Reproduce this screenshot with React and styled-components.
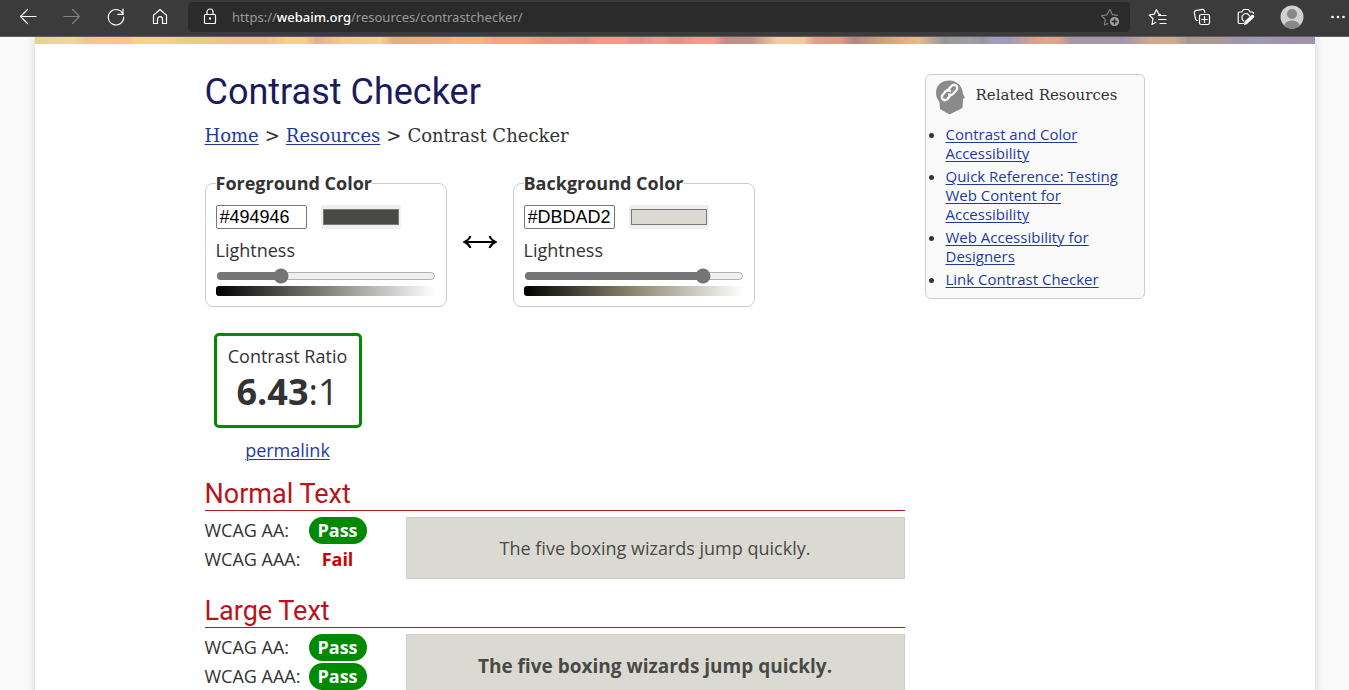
import React from "react";
import styled, { createGlobalStyle } from "styled-components";

const sans = `"Open Sans", "Noto Sans", sans-serif`;
const slab = `"DejaVu Serif", serif`;
const heading = `Roboto, sans-serif`;

const GlobalStyle = createGlobalStyle`
  * { box-sizing: border-box; }
  body { margin: 0; font-family: ${sans}; font-size: 18px; line-height: 24px; color: #333; }
  a { color: #1f3a9d; text-decoration: underline; text-underline-offset: 2px; text-decoration-thickness: 1px; }
  h1, h2, h3, p, ul, dl, dd { margin: 0; padding: 0; }
`;

const Window = styled.div`
  display: flex;
  flex-direction: column;
  height: 100vh;
  overflow: hidden;
`;

const Toolbar = styled.header`
  display: flex;
  align-items: flex-start;
  flex: none;
  height: 37px;
  padding: 2px 0 0 6px;
  background: #3b3b3b;
  border-bottom: 1px solid #5e5e5e;
`;

const ToolButton = styled.button`
  display: flex;
  align-items: center;
  justify-content: center;
  flex: none;
  width: ${(p) => p.$width || 44}px;
  height: 30px;
  padding: 0;
  border: 0;
  background: none;
  color: ${(p) => (p.$muted ? "#808080" : "#fff")};
`;

const MenuButton = styled(ToolButton)`
  justify-content: flex-end;
  padding-right: 4px;
`;

const AddressBar = styled.div`
  display: flex;
  align-items: center;
  flex: 1;
  height: 30px;
  margin: 0 6px;
  background: #2b2b2b;
  border-radius: 4px;
`;

const Address = styled.div`
  flex: 1;
  font-family: "Noto Sans", sans-serif;
  font-size: 13px;
  line-height: 20px;
  color: #9a9a9a;
  strong { color: #fff; font-weight: 500; }
`;

const Viewport = styled.div`
  flex: 1;
  overflow: hidden;
  background: #fafafa;
`;

const Page = styled.div`
  max-width: 1280px;
  min-height: 100%;
  margin: 0 auto;
  background: #fff;
  box-shadow: 0 0 8px #ccd0d0;
`;

const Banner = styled.div`
  height: 7px;
  background: linear-gradient(90deg,
    #e5d48f 0, #efd999 3%, #ecc98c 4%, #fdc588 5%, #fbc487 7%, #f7d380 8%, #f6d37f 10%, #e7d07e 12%, #e9cf7e 13%,
    #eec284 15%, #edc285 18%, #f8d27f 20%, #f7d180 21%, #e2b384 22%, #f3cb86 24%, #f5d188 27%, #dfb17e 28%,
    #e6b17c 30%, #f0b07a 32%, #ffb17c 33%, #ffb17c 35%, #fc9f80 36%, #ffa284 38%, #f09282 40%, #f29586 41%, #e98d83 43%, #ff958a 44%,
    #ff958a 46%, #ea8e88 47%, #f19990 49%, #e98e87 50%, #ff978b 52%, #fc988b 53%, #bf8d87 54%, #c39388 56%,
    #f5c9a1 58%, #f4c8a1 60%, #dfa089 61%, #dc9986 63%, #b0857f 64%, #cda078 66%, #e4b084 68%, #eab98d 69%, #969698 71%,
    #a09da2 73%, #9695a3 74%, #a19fbf 75%, #9e9bbb 76%, #d99e8c 78%, #e3a58c 79%, #e0a18b 80%, #a596a2 81%, #a397aa 85%,
    #cda68d 87%, #cfab8e 89%, #ab9791 90%, #af9b92 92%, #9d97aa 94%, #9f99b4 96%, #a191ad 98%, #a292a9 100%);
`;

const Content = styled.div`
  display: flex;
  align-items: flex-start;
  gap: 20px;
  max-width: 940px;
  margin: 0 auto;
  padding: 30px 0;
`;

const Main = styled.main`
  flex: 1;
`;

const Title = styled.h1`
  font: 400 36px/36px ${heading};
  color: #1a1a5e;
`;

const Breadcrumbs = styled.nav`
  display: flex;
  gap: 6px;
  margin-top: 14px;
  font-family: ${slab};
`;

const ColorPanels = styled.div`
  display: flex;
  align-items: center;
  margin-top: 23px;
`;

const ColorPanel = styled.fieldset`
  width: 242px;
  min-width: 0;
  margin: 0;
  padding: 10px;
  border: 1px solid #ccc;
  border-radius: 8px;
`;

const Legend = styled.legend`
  padding: 0;
  font-weight: 700;
`;

const InputRow = styled.div`
  display: flex;
  gap: 14px;
`;

const HexInput = styled.input`
  width: 91px;
  height: 24px;
  padding: 1px 3px;
  border: 1px solid #767676;
  border-radius: 2px;
  font: 18px "Liberation Sans", Arial, sans-serif;
  color: #000;
`;

const Swatch = styled.input`
  width: 80px;
  height: 24px;
  margin: 0;
  padding: 0;
  border: 0;
  border-radius: 2px;
  background: #efefef;
`;

const SliderLabel = styled.label`
  display: block;
  margin-top: 9px;
`;

const Slider = styled.input`
  display: block;
  width: 100%;
  height: 16px;
  margin: 6px 0 2px;
  accent-color: #757575;
`;

const Ramp = styled.div`
  height: 10px;
  border-radius: 3px;
  background: linear-gradient(90deg, #000, ${(p) => p.$mid}, #fff);
`;

const SwapButton = styled.button`
  display: flex;
  align-items: center;
  justify-content: center;
  width: 66px;
  height: 24px;
  margin-top: 6px;
  padding: 0;
  border: 0;
  background: none;
  color: #000;
`;

const Result = styled.section`
  display: flex;
  flex-direction: column;
  align-items: center;
  gap: 10px;
  width: 148px;
  margin: 26px 0 0 9px;
`;

const RatioBox = styled.div`
  width: 100%;
  padding: 8px 0 9px;
  border: 3px solid #008a00;
  border-radius: 5px;
  text-align: center;
`;

const Ratio = styled.p`
  font-size: 36px;
  line-height: 48px;
`;

const SectionTitle = styled.h2`
  margin: 16px 0 6px;
  border-bottom: 1px solid #b8141e;
  font: 400 27px/32px ${heading};
  color: #b8141e;
`;

const Check = styled.div`
  display: flex;
  align-items: flex-start;
  gap: 39px;
`;

const Scores = styled.dl`
  display: grid;
  grid-template-columns: 104px 58px;
  row-gap: 2px;
  line-height: 27px;
`;

const Score = styled.dd`
  border-radius: 14px;
  background: ${(p) => (p.$pass ? "#008a00" : "transparent")};
  color: ${(p) => (p.$pass ? "#fff" : "#c00")};
  font-weight: 700;
  text-align: center;
`;

const Sample = styled.p`
  flex: 1;
  padding: 18px;
  border: 1px solid #ccc;
  background: #dbdad2;
  color: #494946;
  text-align: center;
  font-size: ${(p) => (p.$large ? 19 : 18)}px;
  line-height: ${(p) => (p.$large ? 26 : 24)}px;
  font-weight: ${(p) => (p.$large ? 700 : 400)};
`;

const Related = styled.aside`
  width: 220px;
  padding: 5px 10px 9px;
  border: 1px solid #ccc;
  border-radius: 6px;
  background: #fafafa;
`;

const RelatedHeader = styled.div`
  display: flex;
  gap: 10px;
  h3 { font: 400 15px/30px ${slab}; }
`;

const RelatedList = styled.ul`
  display: flex;
  flex-direction: column;
  gap: 4px;
  margin: 10px 0 0 10px;
  font-size: 15px;
  line-height: 19px;
`;

function Icon({ size = 20, children }) {
  return (
    <svg width={size} height={size} viewBox={`0 0 ${size} ${size}`} fill="none" stroke="currentColor" strokeWidth="1.2" strokeLinejoin="round" strokeLinecap="round" aria-hidden="true">
      {children}
    </svg>
  );
}

function BrowserToolbar() {
  return (
    <Toolbar>
      <ToolButton aria-label="Back"><Icon><path d="M18 9.500H2.500M9.500 2.500l-7 7 7 7" /></Icon></ToolButton>
      <ToolButton aria-label="Forward" $muted><Icon><path d="M2 9.500h15.500M10.500 2.500l7 7-7 7" /></Icon></ToolButton>
      <ToolButton aria-label="Reload"><Icon><path d="M17.200 7.500A7.700 7.700 0 1 0 17.700 10M17 2v5.300h-5.200" /></Icon></ToolButton>
      <ToolButton aria-label="Home"><Icon><path d="M3.500 8.200 10 2.500l6.500 5.700v8.300h-4v-4.300a2.500 2.500 0 0 0-5 0v4.300h-4z" /></Icon></ToolButton>
      <AddressBar>
        <ToolButton aria-label="Site information"><Icon><rect x="4.500" y="7.500" width="11" height="9" rx="1" /><path d="M7 7.500V5a3 3 0 0 1 6 0v2.500" /><circle cx="10" cy="11.500" r=".6" fill="currentColor" /></Icon></ToolButton>
        <Address>https://<strong>webaim.org</strong>/resources/contrastchecker/</Address>
        <ToolButton aria-label="Add to favorites" $width={40} $muted>
          <Icon>
            <path d="M8 16.500l-3.500 1.500.8-5.400-3.800-3.900 5.300-.8L10 2.500l2.300 5.100 5.200.8" />
            <circle cx="14.500" cy="14.500" r="4" fill="#a0a0a0" stroke="#a0a0a0" />
            <path d="M14.500 12.200v4.600M12.200 14.500h4.600" stroke="#2b2b2b" strokeWidth="1.400" />
          </Icon>
        </ToolButton>
      </AddressBar>
      <ToolButton aria-label="Favorites"><Icon><path d="M12.500 7.500l-1.700-.3L8.500 2.500 6.200 7.200l-5 .8 3.800 3.700-1 5.800 4-2.200M10.500 8.500h7.500M10.500 12.500H18M12 16.500h6" /></Icon></ToolButton>
      <ToolButton aria-label="Collections"><Icon><rect x="7.500" y="7.500" width="10" height="10" rx="1.800" /><path d="M12.500 9.700v5.600M9.700 12.500h5.600M5.500 13.500l-1-.3a1.800 1.800 0 0 1-1-1.300L2.300 5.700a1.800 1.800 0 0 1 1.300-2l6.800-1.300a1.800 1.800 0 0 1 2 1.300l.4 1.800" /></Icon></ToolButton>
      <ToolButton aria-label="Web capture">
        <Icon>
          <path d="M7.500 16.500h-4a1.300 1.300 0 0 1-1.300-1.300V6.300A1.300 1.300 0 0 1 3.500 5h2.300l1.700-2.500h5L14.200 5h2a1.300 1.300 0 0 1 1.300 1.300M13.600 9a4 4 0 1 0-6 4.800" />
          <path d="M16.500 9.500 10 15.500" strokeWidth="3.500" />
          <path d="M8.500 17.500l2-1" />
        </Icon>
      </ToolButton>
      <ToolButton aria-label="Profile" $width={48}>
        <svg width="24" height="24" viewBox="0 0 24 24" aria-hidden="true">
          <clipPath id="avatar"><circle cx="12" cy="12" r="11.500" /></clipPath>
          <circle cx="12" cy="12" r="11.500" fill="#d2d0ce" />
          <g fill="#8a8886" clipPath="url(#avatar)"><circle cx="12" cy="9" r="5" /><ellipse cx="12" cy="21.500" rx="8" ry="6" /></g>
        </svg>
      </ToolButton>
      <MenuButton aria-label="Settings and more" $width={33}>
        <svg width="14" height="4" viewBox="0 0 14 4" fill="#fff" aria-hidden="true"><circle cx="1.500" cy="2" r="1.300" /><circle cx="7" cy="2" r="1.300" /><circle cx="12.500" cy="2" r="1.300" /></svg>
      </MenuButton>
    </Toolbar>
  );
}

function ColorField({ id, title, hex, lightness, mid }) {
  return (
    <ColorPanel>
      <Legend>{title}</Legend>
      <InputRow>
        <HexInput type="text" aria-label={`${title} value`} defaultValue={hex} />
        <Swatch type="color" aria-label={`${title} picker`} defaultValue={hex.toLowerCase()} />
      </InputRow>
      <SliderLabel htmlFor={id}>Lightness</SliderLabel>
      <Slider id={id} type="range" min="0" max="100" defaultValue={lightness} />
      <Ramp $mid={mid} />
    </ColorPanel>
  );
}

function LevelCheck({ aa, aaa, large }) {
  return (
    <Check>
      <Scores>
        <dt>WCAG AA:</dt>
        <Score $pass={aa}>{aa ? "Pass" : "Fail"}</Score>
        <dt>WCAG AAA:</dt>
        <Score $pass={aaa}>{aaa ? "Pass" : "Fail"}</Score>
      </Scores>
      <Sample $large={large}>The five boxing wizards jump quickly.</Sample>
    </Check>
  );
}

const relatedLinks = [
  "Contrast and Color Accessibility",
  "Quick Reference: Testing Web Content for Accessibility",
  "Web Accessibility for Designers",
  "Link Contrast Checker",
];

export default function App() {
  return (
    <Window>
      <GlobalStyle />
      <BrowserToolbar />
      <Viewport>
        <Page>
          <Banner />
          <Content>
            <Main>
              <Title>Contrast Checker</Title>
              <Breadcrumbs aria-label="Breadcrumb">
                <a href="#home">Home</a>
                <span>&gt;</span>
                <a href="#resources">Resources</a>
                <span>&gt;</span>
                <span>Contrast Checker</span>
              </Breadcrumbs>
              <ColorPanels>
                <ColorField id="fg-lightness" title="Foreground Color" hex="#494946" lightness={28} mid="#82827c" />
                <SwapButton aria-label="Swap colors">
                  <svg width="34" height="16" viewBox="0 0 34 16" fill="none" stroke="currentColor" strokeWidth="2" aria-hidden="true">
                    <path d="M2 8h30M7.500 2Q6 6 1.500 8 6 10 7.500 14M26.500 2q1.500 4 6 6-4.500 2-6 6" />
                  </svg>
                </SwapButton>
                <ColorField id="bg-lightness" title="Background Color" hex="#DBDAD2" lightness={84} mid="#8c886f" />
              </ColorPanels>
              <Result>
                <RatioBox>
                  <p>Contrast Ratio</p>
                  <Ratio><b>6.43</b>:1</Ratio>
                </RatioBox>
                <a href="#permalink">permalink</a>
              </Result>
              <SectionTitle>Normal Text</SectionTitle>
              <LevelCheck aa aaa={false} />
              <SectionTitle>Large Text</SectionTitle>
              <LevelCheck aa aaa large />
            </Main>
            <Related>
              <RelatedHeader>
                <svg width="30" height="35" viewBox="0 0 30 35" aria-hidden="true">
                  <path d="M13.500 34.500 4 29 3.500 22C1 19 0 16 0 13 0 5 6 .500 13.500 .500 21 .500 26.500 6 27 14l2 3.500-2 1.500-.5 9z" fill="#8a8a8a" />
                  <g fill="none" stroke="#fafafa" strokeWidth="2.400" strokeLinecap="round">
                    <path d="M11.500 10.500l4-4.500a3.200 3.200 0 0 1 5 4l-3.500 4a3.300 3.300 0 0 1-4 .5" />
                    <path d="M14.500 15l-3 4a3.200 3.200 0 0 1-5-4l3.500-4a3.300 3.300 0 0 1 4 0" />
                  </g>
                </svg>
                <h3>Related Resources</h3>
              </RelatedHeader>
              <RelatedList>
                {relatedLinks.map((text) => (
                  <li key={text}><a href="#related">{text}</a></li>
                ))}
              </RelatedList>
            </Related>
          </Content>
        </Page>
      </Viewport>
    </Window>
  );
}
